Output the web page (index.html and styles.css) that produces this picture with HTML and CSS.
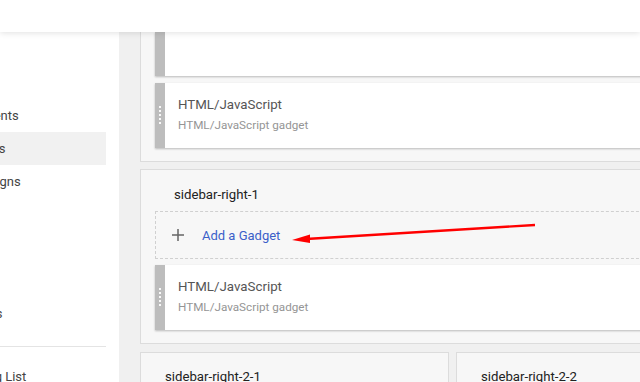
FILE: index.html
```html
<!DOCTYPE html>
<html lang="en">
<head>
    <meta charset="UTF-8">
    <meta name="viewport" content="width=device-width, initial-scale=1.0">
    <title>Layout</title>
    <link rel="stylesheet" href="styles.css">
</head>
<body>
    <div class="header"></div>

    <div class="app">
        <!-- Left navigation (scrolled, labels clipped) -->
        <div class="sidebar">
            <div class="nav-item">Posts</div>
            <div class="nav-item">Stats</div>
            <div class="nav-item">Comments</div>
            <div class="nav-item active">Earnings</div>
            <div class="nav-item">Campaigns</div>
            <div class="nav-item">Pages</div>
            <div class="nav-item">Layout</div>
            <div class="nav-item">Theme</div>
            <div class="nav-item">Settings</div>
            <div class="nav-sep"></div>
            <div class="nav-item">Reading List</div>
        </div>

        <!-- Layout sections -->
        <div class="main">
            <div class="panel panel-cut">
                <div class="widget widget-cut">
                    <div class="handle"></div>
                    <div class="widget-body"></div>
                </div>
                <div class="widget">
                    <div class="handle"><span class="dots"></span></div>
                    <div class="widget-body">
                        <div class="widget-title">HTML/JavaScript</div>
                        <div class="widget-sub">HTML/JavaScript gadget</div>
                    </div>
                </div>
            </div>

            <div class="panel">
                <div class="panel-title">sidebar-right-1</div>
                <div class="add-gadget">
                    <svg class="plus" width="14" height="14" viewBox="0 0 14 14">
                        <path d="M7 1v12M1 7h12" stroke="#666" stroke-width="1.5" fill="none"/>
                    </svg>
                    <span>Add a Gadget</span>
                </div>
                <div class="widget">
                    <div class="handle"><span class="dots"></span></div>
                    <div class="widget-body">
                        <div class="widget-title">HTML/JavaScript</div>
                        <div class="widget-sub">HTML/JavaScript gadget</div>
                    </div>
                </div>
            </div>

            <div class="panel-row">
                <div class="panel panel-half">
                    <div class="panel-title small">sidebar-right-2-1</div>
                </div>
                <div class="panel panel-half panel-last">
                    <div class="panel-title small">sidebar-right-2-2</div>
                </div>
            </div>
        </div>
    </div>

    <!-- red annotation arrow -->
    <svg class="annotation" width="640" height="382" viewBox="0 0 640 382">
        <line x1="535" y1="225" x2="306" y2="239" stroke="#ff0000" stroke-width="2.4"/>
        <polygon points="292,240 310,234.5 310,243" fill="#ff0000"/>
    </svg>
</body>
</html>
```

FILE: styles.css
```css
body {
    font-family: Roboto, "Liberation Sans", Arial, sans-serif;
    margin: 0;
    padding: 0;
    height: 382px;
    overflow: hidden;
    background-color: #f0f0f0;
}
.header {
    height: 32px;
    background-color: #fff;
    box-shadow: 0 1px 6px rgba(0, 0, 0, 0.12);
    position: relative;
    z-index: 2;
}
.app {
    display: flex;
    height: 350px;
}

/* Sidebar (Left) */
.sidebar {
    width: 119px;
    flex-shrink: 0;
    background-color: #fff;
    padding: 1px 13px 0 0;
    box-sizing: border-box;
    overflow: hidden;
}
.nav-item {
    height: 33px;
    line-height: 33px;
    font-size: 13px;
    color: #444;
    white-space: nowrap;
    overflow: hidden;
    text-indent: -45px;
}
.nav-item.active {
    background-color: #f1f1f1;
}
.nav-sep {
    height: 1px;
    background-color: #e4e4e4;
    margin: 16px 0 13px;
}

/* Main area (Right) */
.main {
    flex: 1;
    padding-left: 21px;
    overflow: hidden;
}
.panel {
    background-color: #f7f7f7;
    border: 1px solid #dcdcdc;
    margin-right: -20px;
    padding: 0 0 13px 14px;
    margin-top: 7px;
}
.panel-cut {
    border-top: none;
    margin-top: 0;
}
.panel-title {
    font-size: 13.2px;
    color: #222;
    line-height: 16px;
    padding: 17px 0 0 19px;
    margin-bottom: 8px;
}
.panel-title.small {
    padding: 16px 0 0 10px;
}
.panel-row {
    display: flex;
    gap: 7px;
    margin-top: 8px;
    margin-right: -20px;
}
.panel-row .panel {
    margin: 0;
}
.panel-half {
    width: 309px;
    flex-shrink: 0;
    box-sizing: border-box;
    height: 60px;
}
.panel-last {
    flex: 1;
}

/* Gadgets */
.widget {
    display: flex;
    height: 65px;
    margin-top: 7px;
    box-shadow: 0 1px 2px rgba(0, 0, 0, 0.25);
}
.widget-cut {
    height: 44px;
    margin-top: 0;
}
.handle {
    width: 10px;
    background-color: #bdbdbd;
    flex-shrink: 0;
    display: flex;
    justify-content: center;
    padding-top: 23px;
    box-sizing: border-box;
}
.dots {
    width: 0;
    height: 18px;
    border-left: 2px dotted rgba(255, 255, 255, 0.9);
}
.widget-body {
    flex: 1;
    background-color: #fff;
    padding: 14px 0 0 13px;
}
.widget-title {
    font-size: 13.3px;
    line-height: 16px;
    color: #555;
}
.widget-sub {
    font-size: 11.7px;
    line-height: 14px;
    color: #959595;
    margin-top: 5px;
}
.add-gadget {
    height: 46px;
    border: 1px dashed #d0d0d0;
    display: flex;
    align-items: center;
    padding-left: 15px;
    font-size: 13px;
    color: #3b5fc9;
}
.add-gadget .plus {
    margin-right: 17px;
}
.panel .widget + .widget,
.add-gadget + .widget {
    margin-top: 6px;
}
.panel-cut .widget + .widget {
    margin-top: 7px;
}

.annotation {
    position: absolute;
    left: 0;
    top: 0;
    pointer-events: none;
    z-index: 3;
}
```
